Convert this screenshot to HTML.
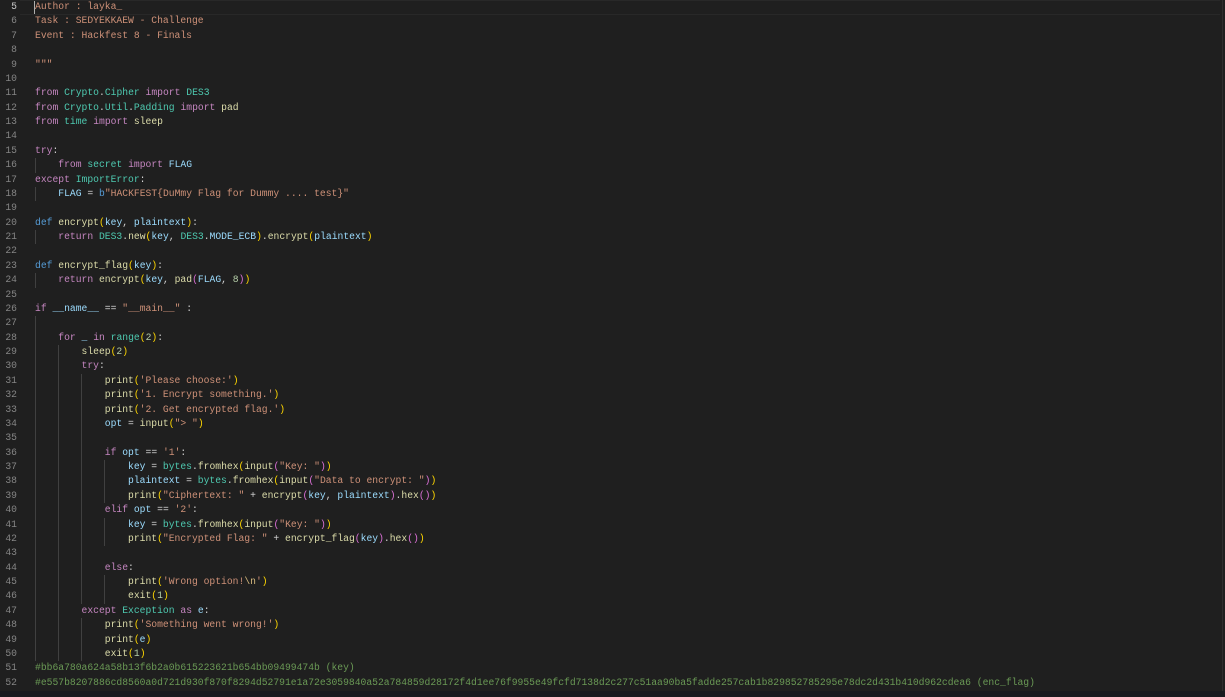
<!DOCTYPE html>
<html><head><meta charset="utf-8"><style>
html,body{margin:0;padding:0;background:#1f1f1f;width:1225px;height:697px;overflow:hidden}
#ed{position:absolute;left:0;top:0;width:1222px;height:691px;background:#1f1f1f;border-right:1px solid #2e2e2e}
#bot{position:absolute;left:0;top:691px;width:1225px;height:6px;background:#181a1f}
.ln{position:absolute;left:0;top:0;width:17px;text-align:right;color:#858585}
.code{position:absolute;left:35px;top:0;color:#d4d4d4;white-space:pre}
.ln,.code{font-family:"Liberation Mono",monospace;font-size:9.7px;line-height:14.38px}
.g{position:absolute;width:1px;background:#404040}
.k{color:#c586c0}.d{color:#569cd6}.c{color:#4ec9b0}.f{color:#dcdcaa}.v{color:#9cdcfe}.s{color:#ce9178}.n{color:#b5cea8}.cm{color:#6a9955}.y{color:#ffd700}.p{color:#da70d6}.b{color:#179fff}.e{color:#d7ba7d}
#cur{position:absolute;left:34px;top:1px;width:1px;height:13px;background:#aeafad}
#hl{position:absolute;left:20px;top:0;width:1200px;height:13px;border-top:1px solid #282828;border-bottom:1px solid #282828}
</style></head><body>
<div id="ed">
<div id="hl"></div>
<div class="g" style="left:35px;top:158.2px;height:14.38px"></div>
<div class="g" style="left:35px;top:186.9px;height:14.38px"></div>
<div class="g" style="left:35px;top:230px;height:14.38px"></div>
<div class="g" style="left:35px;top:273.2px;height:14.38px"></div>
<div class="g" style="left:35px;top:316.3px;height:345.1px"></div>
<div class="g" style="left:58px;top:345.1px;height:316.4px"></div>
<div class="g" style="left:81px;top:373.8px;height:230px"></div>
<div class="g" style="left:81px;top:618.3px;height:43.1px"></div>
<div class="g" style="left:104px;top:460.2px;height:43.1px"></div>
<div class="g" style="left:104px;top:517.7px;height:28.8px"></div>
<div class="g" style="left:104px;top:575.2px;height:28.8px"></div>
<div id="cur"></div>
<div class="ln"><span style="color:#c6c6c6">5</span>
6
7
8
9
10
11
12
13
14
15
16
17
18
19
20
21
22
23
24
25
26
27
28
29
30
31
32
33
34
35
36
37
38
39
40
41
42
43
44
45
46
47
48
49
50
51
52</div>
<div class="code"><span class="s">Author : layka_
Task : SEDYEKKAEW - Challenge
Event : Hackfest 8 - Finals

"""</span>

<span class="k">from</span> <span class="c">Crypto</span>.<span class="c">Cipher</span> <span class="k">import</span> <span class="c">DES3</span>
<span class="k">from</span> <span class="c">Crypto</span>.<span class="c">Util</span>.<span class="c">Padding</span> <span class="k">import</span> <span class="f">pad</span>
<span class="k">from</span> <span class="c">time</span> <span class="k">import</span> <span class="f">sleep</span>

<span class="k">try</span>:
    <span class="k">from</span> <span class="c">secret</span> <span class="k">import</span> <span class="v">FLAG</span>
<span class="k">except</span> <span class="c">ImportError</span>:
    <span class="v">FLAG</span> = <span class="d">b</span><span class="s">"HACKFEST{DuMmy Flag for Dummy .... test}"</span>

<span class="d">def</span> <span class="f">encrypt</span><span class="y">(</span><span class="v">key</span>, <span class="v">plaintext</span><span class="y">)</span>:
    <span class="k">return</span> <span class="c">DES3</span>.<span class="f">new</span><span class="y">(</span><span class="v">key</span>, <span class="c">DES3</span>.<span class="v">MODE_ECB</span><span class="y">)</span>.<span class="f">encrypt</span><span class="y">(</span><span class="v">plaintext</span><span class="y">)</span>

<span class="d">def</span> <span class="f">encrypt_flag</span><span class="y">(</span><span class="v">key</span><span class="y">)</span>:
    <span class="k">return</span> <span class="f">encrypt</span><span class="y">(</span><span class="v">key</span>, <span class="f">pad</span><span class="p">(</span><span class="v">FLAG</span>, <span class="n">8</span><span class="p">)</span><span class="y">)</span>

<span class="k">if</span> <span class="v">__name__</span> == <span class="s">"__main__"</span> :

    <span class="k">for</span> <span class="v">_</span> <span class="k">in</span> <span class="c">range</span><span class="y">(</span><span class="n">2</span><span class="y">)</span>:
        <span class="f">sleep</span><span class="y">(</span><span class="n">2</span><span class="y">)</span>
        <span class="k">try</span>:
            <span class="f">print</span><span class="y">(</span><span class="s">'Please choose:'</span><span class="y">)</span>
            <span class="f">print</span><span class="y">(</span><span class="s">'1. Encrypt something.'</span><span class="y">)</span>
            <span class="f">print</span><span class="y">(</span><span class="s">'2. Get encrypted flag.'</span><span class="y">)</span>
            <span class="v">opt</span> = <span class="f">input</span><span class="y">(</span><span class="s">"&gt; "</span><span class="y">)</span>

            <span class="k">if</span> <span class="v">opt</span> == <span class="s">'1'</span>:
                <span class="v">key</span> = <span class="c">bytes</span>.<span class="f">fromhex</span><span class="y">(</span><span class="f">input</span><span class="p">(</span><span class="s">"Key: "</span><span class="p">)</span><span class="y">)</span>
                <span class="v">plaintext</span> = <span class="c">bytes</span>.<span class="f">fromhex</span><span class="y">(</span><span class="f">input</span><span class="p">(</span><span class="s">"Data to encrypt: "</span><span class="p">)</span><span class="y">)</span>
                <span class="f">print</span><span class="y">(</span><span class="s">"Ciphertext: "</span> + <span class="f">encrypt</span><span class="p">(</span><span class="v">key</span>, <span class="v">plaintext</span><span class="p">)</span>.<span class="f">hex</span><span class="p">()</span><span class="y">)</span>
            <span class="k">elif</span> <span class="v">opt</span> == <span class="s">'2'</span>:
                <span class="v">key</span> = <span class="c">bytes</span>.<span class="f">fromhex</span><span class="y">(</span><span class="f">input</span><span class="p">(</span><span class="s">"Key: "</span><span class="p">)</span><span class="y">)</span>
                <span class="f">print</span><span class="y">(</span><span class="s">"Encrypted Flag: "</span> + <span class="f">encrypt_flag</span><span class="p">(</span><span class="v">key</span><span class="p">)</span>.<span class="f">hex</span><span class="p">()</span><span class="y">)</span>

            <span class="k">else</span>:
                <span class="f">print</span><span class="y">(</span><span class="s">'Wrong option!</span><span class="e">\n</span><span class="s">'</span><span class="y">)</span>
                <span class="f">exit</span><span class="y">(</span><span class="n">1</span><span class="y">)</span>
        <span class="k">except</span> <span class="c">Exception</span> <span class="k">as</span> <span class="v">e</span>:
            <span class="f">print</span><span class="y">(</span><span class="s">'Something went wrong!'</span><span class="y">)</span>
            <span class="f">print</span><span class="y">(</span><span class="v">e</span><span class="y">)</span>
            <span class="f">exit</span><span class="y">(</span><span class="n">1</span><span class="y">)</span>
<span class="cm">#bb6a780a624a58b13f6b2a0b615223621b654bb09499474b (key)</span>
<span class="cm">#e557b8207886cd8560a0d721d930f870f8294d52791e1a72e3059840a52a784859d28172f4d1ee76f9955e49fcfd7138d2c277c51aa90ba5fadde257cab1b829852785295e78dc2d431b410d962cdea6 (enc_flag)</span></div>
</div>
<div id="bot"></div>
</body></html>
